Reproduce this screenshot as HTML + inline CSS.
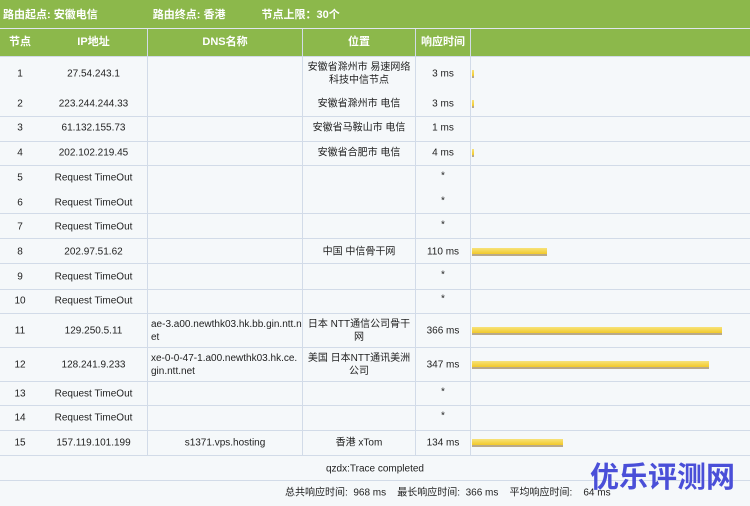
<!DOCTYPE html><html><head><meta charset="utf-8"><style>
body{margin:0;width:750px;height:506px;overflow:hidden;background:#f5f8fa;font-family:"Liberation Sans","Noto Sans CJK SC",sans-serif;font-size:10px;color:#222;position:relative}
.a{position:absolute}
.top{left:0;top:0;width:750px;height:28px;background:#8cb84b;color:#fff;font-weight:bold;font-size:11px;line-height:30px}
.hd{left:0;top:29px;width:750px;height:27px;background:#8cb84b;color:#fff;font-weight:bold;font-size:11px}
.h{position:absolute;top:0;height:27px;line-height:27px;text-align:center}
.hl{left:0;width:750px;height:1px;background:#d2dbe8}
.vl{width:1px;background:#d2dbe8}
.c{position:absolute;text-align:center;transform:translateY(-50%);line-height:13px}
.d{text-align:left;word-break:break-all;padding-left:3px;box-sizing:border-box}
.bar{position:absolute;left:472px;height:6px;background:linear-gradient(#f7e27a,#f2c92a);border-bottom:2px solid #b9a98a}
</style></head><body>
<div class="a top"><span style="margin-left:3px">路由起点: 安徽电信</span><span style="margin-left:55px">路由终点: 香港</span><span style="margin-left:36px">节点上限：30个</span></div>
<div class="a hd">
<div class="h" style="left:0;width:40px">节点</div>
<div class="h" style="left:40px;width:107px">IP地址</div>
<div class="h" style="left:148px;width:154px">DNS名称</div>
<div class="h" style="left:303px;width:112px">位置</div>
<div class="h" style="left:416px;width:54px">响应时间</div>
</div>
<div class="a vl" style="left:147px;top:29px;height:426px"></div>
<div class="a vl" style="left:302px;top:29px;height:426px"></div>
<div class="a vl" style="left:415px;top:29px;height:426px"></div>
<div class="a vl" style="left:470px;top:29px;height:426px"></div>
<div class="a hl" style="top:28px;background:#e0e6ee"></div>
<div class="a hl" style="top:56px"></div>
<div class="a hl" style="top:116px"></div>
<div class="a hl" style="top:141px"></div>
<div class="a hl" style="top:165px"></div>
<div class="a hl" style="top:213px"></div>
<div class="a hl" style="top:238px"></div>
<div class="a hl" style="top:263px"></div>
<div class="a hl" style="top:289px"></div>
<div class="a hl" style="top:313px"></div>
<div class="a hl" style="top:347px"></div>
<div class="a hl" style="top:381px"></div>
<div class="a hl" style="top:405px"></div>
<div class="a hl" style="top:430px"></div>
<div class="a hl" style="top:455px"></div>
<div class="a hl" style="top:480px"></div>

<div class="c" style="left:0;width:40px;top:74px">1</div><div class="c" style="left:40px;width:107px;top:74px">27.54.243.1</div><div class="c" style="left:303px;width:112px;top:74px">安徽省滁州市 易速网络科技中信节点</div><div class="c" style="left:416px;width:54px;top:74px">3 ms</div><div class="bar" style="top:70px;width:2px"></div>
<div class="c" style="left:0;width:40px;top:104px">2</div><div class="c" style="left:40px;width:107px;top:104px">223.244.244.33</div><div class="c" style="left:303px;width:112px;top:104px">安徽省滁州市 电信</div><div class="c" style="left:416px;width:54px;top:104px">3 ms</div><div class="bar" style="top:100px;width:2px"></div>
<div class="c" style="left:0;width:40px;top:128px">3</div><div class="c" style="left:40px;width:107px;top:128px">61.132.155.73</div><div class="c" style="left:303px;width:112px;top:128px">安徽省马鞍山市 电信</div><div class="c" style="left:416px;width:54px;top:128px">1 ms</div>
<div class="c" style="left:0;width:40px;top:153px">4</div><div class="c" style="left:40px;width:107px;top:153px">202.102.219.45</div><div class="c" style="left:303px;width:112px;top:153px">安徽省合肥市 电信</div><div class="c" style="left:416px;width:54px;top:153px">4 ms</div><div class="bar" style="top:149px;width:2px"></div>
<div class="c" style="left:0;width:40px;top:178px">5</div><div class="c" style="left:40px;width:107px;top:178px">Request TimeOut</div><div class="c" style="left:416px;width:54px;top:176px">*</div>
<div class="c" style="left:0;width:40px;top:203px">6</div><div class="c" style="left:40px;width:107px;top:203px">Request TimeOut</div><div class="c" style="left:416px;width:54px;top:201px">*</div>
<div class="c" style="left:0;width:40px;top:227px">7</div><div class="c" style="left:40px;width:107px;top:227px">Request TimeOut</div><div class="c" style="left:416px;width:54px;top:225px">*</div>
<div class="c" style="left:0;width:40px;top:252px">8</div><div class="c" style="left:40px;width:107px;top:252px">202.97.51.62</div><div class="c" style="left:303px;width:112px;top:252px">中国 中信骨干网</div><div class="c" style="left:416px;width:54px;top:252px">110 ms</div><div class="bar" style="top:248px;width:75px"></div>
<div class="c" style="left:0;width:40px;top:277px">9</div><div class="c" style="left:40px;width:107px;top:277px">Request TimeOut</div><div class="c" style="left:416px;width:54px;top:275px">*</div>
<div class="c" style="left:0;width:40px;top:301px">10</div><div class="c" style="left:40px;width:107px;top:301px">Request TimeOut</div><div class="c" style="left:416px;width:54px;top:299px">*</div>
<div class="c" style="left:0;width:40px;top:331px">11</div><div class="c" style="left:40px;width:107px;top:331px">129.250.5.11</div><div class="c d" style="left:148px;width:154px;top:331px">ae-3.a00.newthk03.hk.bb.gin.ntt.net</div><div class="c" style="left:303px;width:112px;top:331px">日本 NTT通信公司骨干网</div><div class="c" style="left:416px;width:54px;top:331px">366 ms</div><div class="bar" style="top:327px;width:250px"></div>
<div class="c" style="left:0;width:40px;top:365px">12</div><div class="c" style="left:40px;width:107px;top:365px">128.241.9.233</div><div class="c d" style="left:148px;width:154px;top:365px">xe-0-0-47-1.a00.newthk03.hk.ce.gin.ntt.net</div><div class="c" style="left:303px;width:112px;top:365px">美国 日本NTT通讯美洲公司</div><div class="c" style="left:416px;width:54px;top:365px">347 ms</div><div class="bar" style="top:361px;width:237px"></div>
<div class="c" style="left:0;width:40px;top:394px">13</div><div class="c" style="left:40px;width:107px;top:394px">Request TimeOut</div><div class="c" style="left:416px;width:54px;top:392px">*</div>
<div class="c" style="left:0;width:40px;top:418px">14</div><div class="c" style="left:40px;width:107px;top:418px">Request TimeOut</div><div class="c" style="left:416px;width:54px;top:416px">*</div>
<div class="c" style="left:0;width:40px;top:443px">15</div><div class="c" style="left:40px;width:107px;top:443px">157.119.101.199</div><div class="c" style="left:148px;width:154px;top:443px">s1371.vps.hosting</div><div class="c" style="left:303px;width:112px;top:443px">香港 xTom</div><div class="c" style="left:416px;width:54px;top:443px">134 ms</div><div class="bar" style="top:439px;width:91px"></div>
<div class="c" style="left:0;width:750px;top:469px">qzdx:Trace completed</div>
<div class="c" style="left:285px;top:493px;text-align:left;white-space:pre">总共响应时间:  968 ms    最长响应时间:  366 ms    平均响应时间:    64 ms</div>
<div class="a" style="left:590px;top:461px;font-size:29px;font-weight:bold;color:#4a4fd8;line-height:34px">优乐评测网</div>
</body></html>
